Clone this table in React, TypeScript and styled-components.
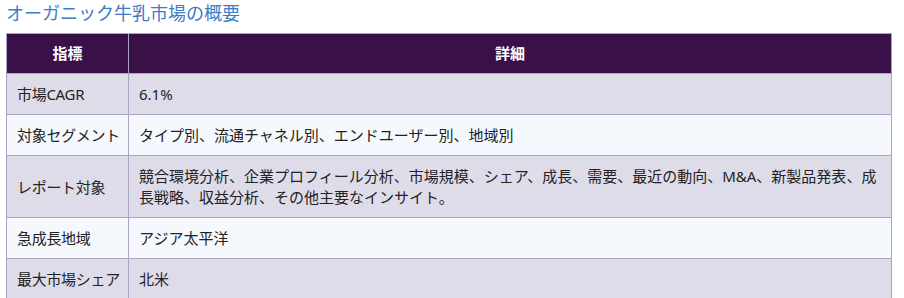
import React from "react";
import styled, { createGlobalStyle } from "styled-components";

const GlobalStyle = createGlobalStyle`
  html, body {
    margin: 0;
    padding: 0;
    background: #ffffff;
  }
  body {
    font-family: "Noto Sans", "Noto Sans CJK JP", sans-serif;
    color: #222222;
  }
`;

const Page = styled.div`
  padding: 0 12px 0 6px;
  display: flex;
  flex-direction: column;
  gap: 7px;
`;

const Title = styled.h2`
  margin: 0;
  font-family: "Noto Sans", "Noto Sans CJK JP", sans-serif;
  font-weight: 400;
  font-size: 18px;
  line-height: 26px;
  color: #3c7cc6;
`;

const Table = styled.table`
  width: 886px;
  border-collapse: collapse;
  table-layout: fixed;
  font-size: 15px;
  line-height: 21px;
`;

const HeadCell = styled.th<{ $w?: number }>`
  box-sizing: border-box;
  ${(p) => (p.$w ? `width: ${p.$w}px;` : "")}
  background: #3a1049;
  color: #ffffff;
  font-weight: 700;
  text-align: center;
  padding: 9px 10px 9px;
  border: 1px solid #aaa4c2;
`;

const Row = styled.tr<{ $alt: boolean }>`
  background: ${(p) => (p.$alt ? "#f5f9fd" : "#dfdcea")};
`;

const Cell = styled.td<{ $label?: boolean }>`
  padding: 10px 10px 9px;
  border: 1px solid #aaa4c2;
  vertical-align: middle;
  color: #222222;
  white-space: ${(p) => (p.$label ? "nowrap" : "normal")};
  ${(p) => (p.$label ? "letter-spacing: -0.3px; padding-right: 4px;" : "")}
`;

const rows: [string, string][] = [
  ["市場CAGR", "6.1%"],
  ["対象セグメント", "タイプ別、流通チャネル別、エンドユーザー別、地域別"],
  [
    "レポート対象",
    "競合環境分析、企業プロフィール分析、市場規模、シェア、成長、需要、最近の動向、M&A、新製品発表、成長戦略、収益分析、その他主要なインサイト。",
  ],
  ["急成長地域", "アジア太平洋"],
  ["最大市場シェア", "北米"],
];

export default function App() {
  return (
    <>
      <GlobalStyle />
      <Page>
        <Title>オーガニック牛乳市場の概要</Title>
        <Table>
          <thead>
            <tr>
              <HeadCell $w={122}>指標</HeadCell>
              <HeadCell>詳細</HeadCell>
            </tr>
          </thead>
          <tbody>
            {rows.map(([k, v], i) => (
              <Row key={k} $alt={i % 2 === 1}>
                <Cell $label>{k}</Cell>
                <Cell>{v}</Cell>
              </Row>
            ))}
          </tbody>
        </Table>
      </Page>
    </>
  );
}
